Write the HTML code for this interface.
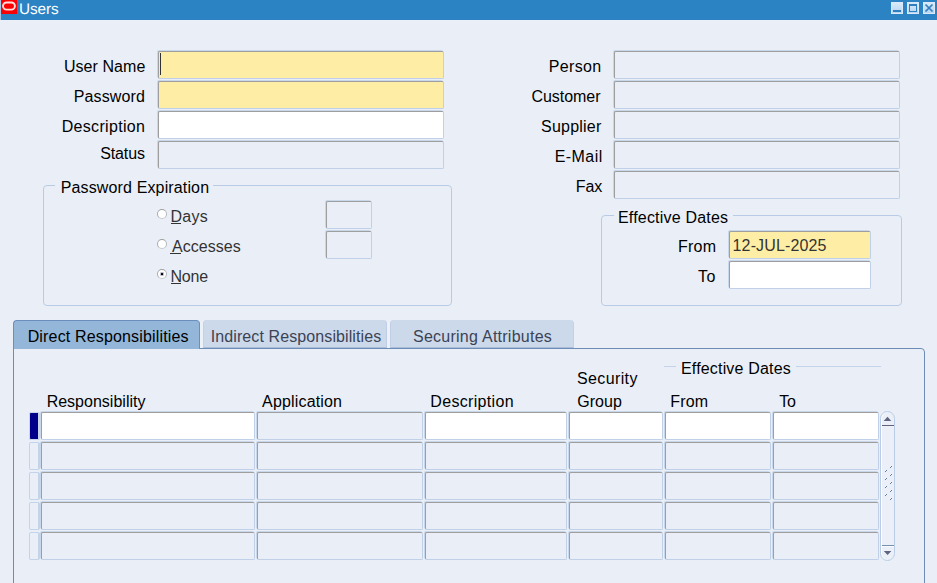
<!DOCTYPE html>
<html lang="en">
<head>
<meta charset="utf-8">
<title>Users</title>
<style>
html,body{margin:0;padding:0;}
body{width:937px;height:583px;overflow:hidden;background:#eaeff7;font-family:"Liberation Sans",sans-serif;font-size:16px;color:#000;position:relative;}
#win{position:absolute;left:0;top:0;width:937px;height:583px;overflow:hidden;background:#eaeff7;}
.abs,.f,.t,.ind,.fr{position:absolute;box-sizing:border-box;}
/* title bar */
#tbar{left:1px;top:0;width:936px;height:20px;background:#2c83c4;}
#tstrip{left:0;top:0;width:1px;height:20px;background:#a6c6e4;}
#tline{left:0;top:20px;width:937px;height:1px;background:#ebf0f7;}
#ticon{left:1px;top:0;width:16px;height:14px;background:#fc0004;}
.wb{top:2px;width:12px;height:12px;border:1px solid #d9e9f9;background:linear-gradient(#d9e9f9,#b6d5f2);}
/* text */
.t{white-space:nowrap;height:20px;line-height:20px;font-size:16px;color:#000;}
.r{text-align:right;}
.g{color:#333;}
.u{text-decoration:none;}
.ul{height:1px;background:#333;}
/* fields */
.f{height:28px;border:1px solid;border-color:#9e9e9f #bfd0e8 #bfd0e8 #9e9e9f;border-radius:2px;box-shadow:-1px -1px 0 #c9d7eb;background:#eaeff7;}
.y{background:#feeea5;}
.w{background:#fff;}
/* frames */
.fr{border:1px solid #b9cbe4;border-radius:4px;}
.lg{background:#eaeff7;}
/* radio */
.rad{width:10px;height:10px;border-radius:50%;border:1px solid;border-color:#9f9f9f #b4b7bc #c4c8ce #a8aaad;background:#fff;}
/* tabs */
.tab{top:320px;height:28px;border-radius:4px 4px 0 0;background:#ccd9eb;}
/* indicators */
.ind{width:11px;height:28px;border:1px solid #c3d3e9;border-right-width:2px;border-radius:2px;}
.on{background:#00008b;border-color:#c9d6ea;}
</style>
</head>
<body>
<div id="win">
<!-- title bar -->
<div class="abs" id="tbar"></div>
<div class="abs" id="tstrip"></div>
<div class="abs" id="tline"></div>
<div class="abs" id="ticon"><svg width="16" height="14" viewBox="0 0 16 14"><rect x="2.05" y="2.45" width="11.85" height="7.15" rx="3.57" ry="3.57" fill="none" stroke="#fbe0dc" stroke-width="1.9"/></svg></div>
<div class="t" id="title" style="left:19.2px;top:-1.5px;letter-spacing:-0.1px;color:#fff;font-size:15.3px;transform:rotate(0.05deg);transform-origin:0 0">Users</div>
<div class="abs wb" style="left:891px"><svg width="10" height="10" viewBox="0 0 10 10" style="display:block"><rect x="1" y="7" width="8" height="2" fill="#2f7fc0"/></svg></div>
<div class="abs wb" style="left:907px"><svg width="10" height="10" viewBox="0 0 10 10" style="display:block"><rect x="1.5" y="1.5" width="7" height="7" fill="none" stroke="#2f7fc0" stroke-width="1"/><rect x="1" y="1" width="8" height="2" fill="#2f7fc0"/></svg></div>
<div class="abs wb" style="left:923px"><svg width="10" height="10" viewBox="0 0 10 10" style="display:block"><path d="M1.5 1.5 L8.5 8.5 M8.5 1.5 L1.5 8.5" stroke="#2f7fc0" stroke-width="1.7" fill="none"/></svg></div>

<!-- left column -->
<div class="t" id="lUser" style="left:63.9px;top:57px;letter-spacing:0.06px">User Name</div>
<div class="t" id="lPass" style="left:73.65px;top:87px;letter-spacing:0.16px">Password</div>
<div class="t" id="lDesc" style="left:61.65px;top:117px;letter-spacing:0.33px">Description</div>
<div class="t" id="lStat" style="left:100.13px;top:144px;letter-spacing:-0.09px">Status</div>
<div class="f y" style="left:158px;top:51px;width:286px"></div>
<div class="abs" style="left:160px;top:53px;width:1px;height:22px;background:#333"></div>
<div class="f y" style="left:158px;top:81px;width:286px"></div>
<div class="f w" style="left:158px;top:111px;width:286px"></div>
<div class="f" style="left:158px;top:141px;width:286px"></div>

<!-- password expiration -->
<div class="fr" style="left:43px;top:185px;width:409px;height:121px"></div>
<div class="abs lg" style="left:55px;top:180px;width:158px;height:12px"></div>
<div class="t" id="legPE" style="left:60.69px;top:178px;letter-spacing:0.14px">Password Expiration</div>
<div class="abs rad" style="left:157px;top:209px"></div>
<div class="abs rad" style="left:157px;top:239px"></div>
<div class="abs rad" style="left:157px;top:269px"></div>
<div class="abs" style="left:161px;top:273px;width:2px;height:2px;background:#000;box-shadow:0 0 0 1px rgba(80,80,120,0.4);border-radius:0.5px"></div>
<div class="t" id="rDays" style="left:170.43px;top:207px;letter-spacing:0.26px;color:#333"><span class="u">D</span>ays</div>
<div class="t" id="rAcc" style="left:171.9px;top:237px;letter-spacing:0.06px;color:#333"><span class="u">A</span>ccesses</div>
<div class="t" id="rNone" style="left:170.43px;top:267px;letter-spacing:-0.15px;color:#333"><span class="u">N</span>one</div>
<div class="abs ul" style="left:171px;top:223px;width:10px"></div>
<div class="abs ul" style="left:170px;top:253px;width:11px"></div>
<div class="abs ul" style="left:171px;top:283px;width:10px"></div>
<div class="f" style="left:326px;top:201px;width:46px"></div>
<div class="f" style="left:326px;top:231px;width:46px"></div>

<!-- right column -->
<div class="t" id="lPers" style="left:548.69px;top:57px;letter-spacing:0.36px">Person</div>
<div class="t" id="lCust" style="left:531.4px;top:87px;letter-spacing:-0.03px">Customer</div>
<div class="t" id="lSupp" style="left:541.02px;top:117px;letter-spacing:0.22px">Supplier</div>
<div class="t" id="lMail" style="left:554.77px;top:147px;letter-spacing:0.42px">E-Mail</div>
<div class="t" id="lFax" style="left:575.79px;top:177px;letter-spacing:-0.15px">Fax</div>
<div class="f" style="left:614px;top:51px;width:286px"></div>
<div class="f" style="left:614px;top:81px;width:286px"></div>
<div class="f" style="left:614px;top:111px;width:286px"></div>
<div class="f" style="left:614px;top:141px;width:286px"></div>
<div class="f" style="left:614px;top:171px;width:286px"></div>

<!-- effective dates -->
<div class="fr" style="left:601px;top:215px;width:301px;height:91px"></div>
<div class="abs lg" style="left:614px;top:210px;width:119px;height:12px"></div>
<div class="t" id="legED" style="left:617.95px;top:208px;letter-spacing:0.2px">Effective Dates</div>
<div class="t" id="lFrom" style="left:678.06px;top:237px;letter-spacing:0.22px">From</div>
<div class="t" id="lTo" style="left:698.05px;top:267px;letter-spacing:0.5px">To</div>
<div class="f y" style="left:729px;top:231px;width:142px"></div>
<div class="t" id="date" style="left:732.59px;top:236px;letter-spacing:0.13px;color:#333">12-JUL-2025</div>
<div class="f w" style="left:729px;top:261px;width:142px"></div>

<!-- tab panel -->
<div class="abs" id="panel" style="left:13px;top:348px;width:912px;height:260px;border:1px solid #6d8db6;border-radius:0 4px 0 0;"></div>
<div class="abs tab" style="left:203px;width:184px;border-bottom:1px solid #a9bdd9;border-left:1px solid #c3d1e6;border-right:1px solid #bfcee4;"></div>
<div class="abs tab" style="left:390px;width:184px;border-bottom:1px solid #a9bdd9;border-left:1px solid #bfcee4;border-right:1px solid #c3d1e6;"></div>
<div class="abs" style="left:387px;top:322px;width:3px;height:26px;background:#ecf0f7"></div>
<div class="abs" style="left:200px;top:322px;width:3px;height:26px;background:#ecf0f7"></div>
<div class="abs tab" style="left:13px;width:187px;height:29px;background:#93b6d9;border:1px solid #6a8fbc;border-right-color:#6d8fba;border-bottom:none;"></div>
<div class="t" id="tab1" style="left:27.67px;top:327px;letter-spacing:0.16px">Direct Responsibilities</div>
<div class="t" id="tab2" style="left:210.76px;top:327px;letter-spacing:0.1px;color:#3b4355">Indirect Responsibilities</div>
<div class="t" id="tab3" style="left:413px;top:327px;letter-spacing:0.25px;color:#3b4355">Securing Attributes</div>

<!-- grid header -->
<div class="t" id="hResp" style="left:46.65px;top:392px;letter-spacing:0.01px">Responsibility</div>
<div class="t" id="hApp" style="left:262.11px;top:392px;letter-spacing:0.16px">Application</div>
<div class="t" id="hDesc" style="left:430.29px;top:392px;letter-spacing:0.33px">Description</div>
<div class="t" id="hSec" style="left:577.05px;top:369px;letter-spacing:0.37px">Security</div>
<div class="t" id="hGrp" style="left:577.16px;top:392px;letter-spacing:0.08px">Group</div>
<div class="t" id="hFrom" style="left:670.32px;top:392px;letter-spacing:0.16px">From</div>
<div class="t" id="hTo" style="left:779.24px;top:392px;letter-spacing:-0.15px">To</div>
<div class="abs" style="left:664px;top:366px;width:12px;height:1px;background:#c3d3e9"></div>
<div class="abs" style="left:796px;top:366px;width:85px;height:1px;background:#c3d3e9"></div>
<div class="t" id="hED" style="left:680.95px;top:359px;letter-spacing:0.18px">Effective Dates</div>

<!-- grid rows -->
<div class="ind on" style="left:29px;top:412px"></div>
<div class="f w" style="left:41px;top:412px;width:214px"></div>
<div class="f" style="left:257px;top:412px;width:166px"></div>
<div class="f w" style="left:425px;top:412px;width:142px"></div>
<div class="f w" style="left:569px;top:412px;width:94px"></div>
<div class="f w" style="left:665px;top:412px;width:106px"></div>
<div class="f w" style="left:773px;top:412px;width:106px"></div>
<div class="ind" style="left:29px;top:442px"></div>
<div class="f" style="left:41px;top:442px;width:214px"></div>
<div class="f" style="left:257px;top:442px;width:166px"></div>
<div class="f" style="left:425px;top:442px;width:142px"></div>
<div class="f" style="left:569px;top:442px;width:94px"></div>
<div class="f" style="left:665px;top:442px;width:106px"></div>
<div class="f" style="left:773px;top:442px;width:106px"></div>
<div class="ind" style="left:29px;top:472px"></div>
<div class="f" style="left:41px;top:472px;width:214px"></div>
<div class="f" style="left:257px;top:472px;width:166px"></div>
<div class="f" style="left:425px;top:472px;width:142px"></div>
<div class="f" style="left:569px;top:472px;width:94px"></div>
<div class="f" style="left:665px;top:472px;width:106px"></div>
<div class="f" style="left:773px;top:472px;width:106px"></div>
<div class="ind" style="left:29px;top:502px"></div>
<div class="f" style="left:41px;top:502px;width:214px"></div>
<div class="f" style="left:257px;top:502px;width:166px"></div>
<div class="f" style="left:425px;top:502px;width:142px"></div>
<div class="f" style="left:569px;top:502px;width:94px"></div>
<div class="f" style="left:665px;top:502px;width:106px"></div>
<div class="f" style="left:773px;top:502px;width:106px"></div>
<div class="ind" style="left:29px;top:532px"></div>
<div class="f" style="left:41px;top:532px;width:214px"></div>
<div class="f" style="left:257px;top:532px;width:166px"></div>
<div class="f" style="left:425px;top:532px;width:142px"></div>
<div class="f" style="left:569px;top:532px;width:94px"></div>
<div class="f" style="left:665px;top:532px;width:106px"></div>
<div class="f" style="left:773px;top:532px;width:106px"></div>


<!-- scrollbar -->
<div class="abs" style="left:880px;top:411px;width:15px;height:150px;border:1px solid #b9cde6;border-radius:7.5px;background:#ebeff7;box-shadow:inset 1px 0 0 #fff"></div>
<svg class="abs" style="left:881px;top:411px" width="14" height="150" viewBox="0 0 14 150">
<path d="M6.5 5.7 L10.3 9.9 L2.7 9.9 Z" fill="#61647e"/>
<rect x="1" y="14" width="12" height="1.2" fill="#5f627c"/><rect x="1" y="15.2" width="12" height="0.8" fill="#f7f9fc"/>
<rect x="1" y="134" width="12" height="1" fill="#7890b2"/><rect x="1" y="135" width="12" height="1" fill="#f7f9fc"/>
<path d="M2.8 140 L10.4 140 L6.6 144 Z" fill="#61647e"/>
<g><rect x="9" y="55" width="1" height="1" fill="#fff"/><rect x="10" y="55" width="1" height="1" fill="#5b7aa8"/><rect x="9" y="56" width="1" height="1" fill="#5b7aa8"/>
<rect x="9" y="63" width="1" height="1" fill="#fff"/><rect x="10" y="63" width="1" height="1" fill="#5b7aa8"/><rect x="9" y="64" width="1" height="1" fill="#5b7aa8"/>
<rect x="9" y="71" width="1" height="1" fill="#fff"/><rect x="10" y="71" width="1" height="1" fill="#5b7aa8"/><rect x="9" y="72" width="1" height="1" fill="#5b7aa8"/>
<rect x="9" y="79" width="1" height="1" fill="#fff"/><rect x="10" y="79" width="1" height="1" fill="#5b7aa8"/><rect x="9" y="80" width="1" height="1" fill="#5b7aa8"/>
<rect x="9" y="87" width="1" height="1" fill="#fff"/><rect x="10" y="87" width="1" height="1" fill="#5b7aa8"/><rect x="9" y="88" width="1" height="1" fill="#5b7aa8"/>
<rect x="4" y="59" width="1" height="1" fill="#fff"/><rect x="5" y="59" width="1" height="1" fill="#5b7aa8"/><rect x="4" y="60" width="1" height="1" fill="#5b7aa8"/>
<rect x="4" y="67" width="1" height="1" fill="#fff"/><rect x="5" y="67" width="1" height="1" fill="#5b7aa8"/><rect x="4" y="68" width="1" height="1" fill="#5b7aa8"/>
<rect x="4" y="75" width="1" height="1" fill="#fff"/><rect x="5" y="75" width="1" height="1" fill="#5b7aa8"/><rect x="4" y="76" width="1" height="1" fill="#5b7aa8"/>
<rect x="4" y="83" width="1" height="1" fill="#fff"/><rect x="5" y="83" width="1" height="1" fill="#5b7aa8"/><rect x="4" y="84" width="1" height="1" fill="#5b7aa8"/>
</g>
</svg>
</div>
</body>
</html>
